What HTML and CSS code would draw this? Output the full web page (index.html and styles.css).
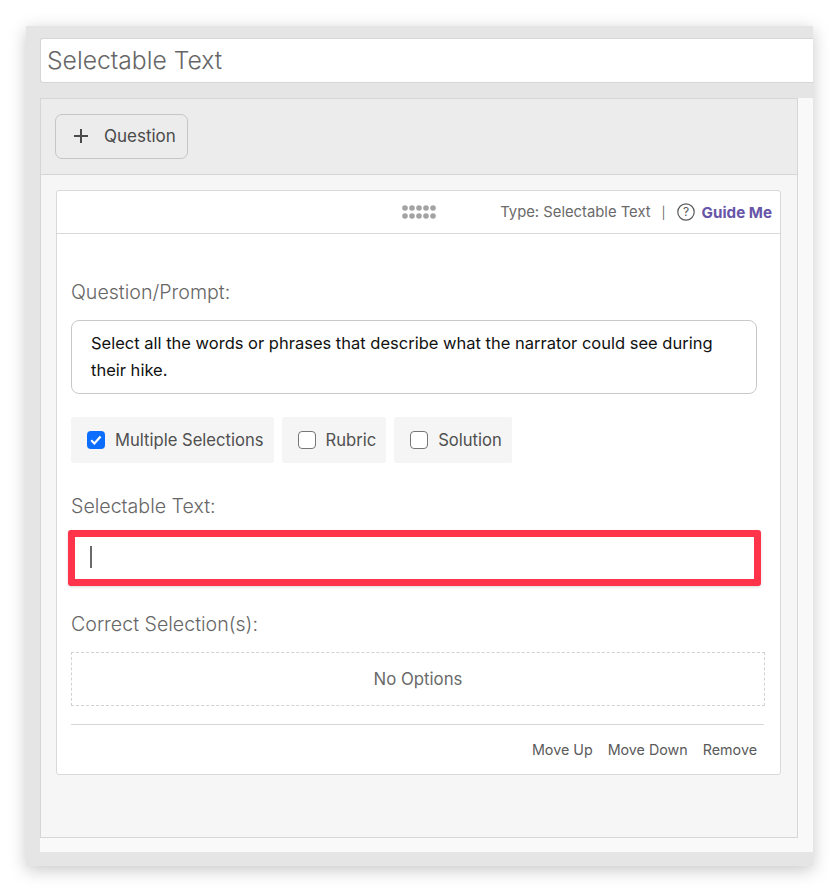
FILE: index.html
```html
<!DOCTYPE html>
<html lang="en">
<head>
<meta charset="utf-8">
<title>Selectable Text</title>
<link rel="stylesheet" href="styles.css">
</head>
<body>
<main class="panel">
  <div class="title-input">Selectable Text</div>
  <div class="scroll">
    <section class="inner">
      <div class="toolbar">
        <button class="add-btn"><svg class="plus" width="16" height="16" viewBox="0 0 16 16"><path d="M8 1v14M1 8h14" stroke="#4a4a4a" stroke-width="2" fill="none"/></svg><span>Question</span></button>
      </div>
      <div class="content">
        <article class="card">
          <header class="card-head">
            <svg class="grip" width="34" height="14" viewBox="0 0 34 14"><g fill="#a3a3a3"><circle cx="3" cy="3" r="2.8"/><circle cx="10" cy="3" r="2.8"/><circle cx="17" cy="3" r="2.8"/><circle cx="24" cy="3" r="2.8"/><circle cx="31" cy="3" r="2.8"/><circle cx="3" cy="11" r="2.8"/><circle cx="10" cy="11" r="2.8"/><circle cx="17" cy="11" r="2.8"/><circle cx="24" cy="11" r="2.8"/><circle cx="31" cy="11" r="2.8"/></g></svg>
            <div class="meta">
              <span class="type">Type: Selectable Text</span>
              <span class="sep">|</span>
              <svg class="help" width="18" height="18" viewBox="0 0 18 18"><circle cx="9" cy="9" r="8.2" fill="none" stroke="#595959" stroke-width="1.2"/><text x="9" y="13" text-anchor="middle" class="help-q">?</text></svg>
              <a class="guide">Guide Me</a>
            </div>
          </header>
          <div class="card-body">
            <label class="label first">Question/Prompt:</label>
            <div class="prompt">Select all the words or phrases that describe what the narrator could see during their hike.</div>
            <div class="options">
              <div class="opt"><span class="box checked"><svg width="18" height="18" viewBox="0 0 18 18"><path d="M4.2 9.3l3.2 3.2 6.2-7" fill="none" stroke="#fff" stroke-width="2.2"/></svg></span>Multiple Selections</div>
              <div class="opt wide"><span class="box"></span>Rubric</div>
              <div class="opt wide"><span class="box"></span>Solution</div>
            </div>
            <label class="label second">Selectable Text:</label>
            <div class="text-field"><span class="caret"></span></div>
            <label class="label third">Correct Selection(s):</label>
            <div class="no-options">No Options</div>
            <footer class="card-foot">
              <a>Move Up</a><a>Move Down</a><a>Remove</a>
            </footer>
          </div>
        </article>
      </div>
    </section>
  </div>
</main>
</body>
</html>
```
FILE: styles.css
```css
* { box-sizing: border-box; }
html, body { margin: 0; height: 100%; background: #fff; }
body { padding: 26px; font-family: "Inter", "Liberation Sans", sans-serif; overflow: hidden; }
.panel {
  width: 787px; height: 840px; background: #e5e5e5;
  padding: 12px 0 14px 14px;
  box-shadow: 0 4px 16px rgba(0,0,0,.22);
}
.title-input {
  height: 45px; background: #fff; border: 1px solid #d6d6d6; border-right: 0;
  border-radius: 3px 0 0 3px; padding-left: 6px;
  font-size: 24.7px; font-weight: 300; line-height: 42px; color: #666;
  margin-bottom: 15px;
}
.scroll { height: 754px; background: #f9f9f9; }
.inner { width: 758px; height: 740px; background: #f6f6f6; border: 1px solid #d6d6d6; }
.toolbar { height: 76px; background: #ececec; border-bottom: 1px solid #d6d6d6; padding: 15px 14px; }
.add-btn {
  width: 133px; height: 45px; background: #ececec; border: 1px solid #c6c6c6; border-radius: 7px;
  display: flex; align-items: center; padding: 0 0 2px 17px; gap: 15px;
  font: 400 17px "Inter", sans-serif; color: #4a4a4a;
}
.content { padding: 15px 15px 0; }
.card { width: 725px; height: 585px; background: #fff; border: 1px solid #d9d9d9; border-radius: 3px; }
.card-head { height: 43px; border-bottom: 1px solid #d9d9d9; display: flex; align-items: center; position: relative; padding-right: 8px; justify-content: flex-end; }
.grip { position: absolute; left: 345px; top: 14px; }
.meta { display: flex; align-items: center; font-size: 14.8px; color: #6a6a6a; }
.sep { margin: 0 11px 0 11px; font-size: 12px; }
.help { margin-right: 7px; }
.help-q { font: 400 12px "Inter", sans-serif; fill: #595959; }
.guide { font-size: 15.2px; font-weight: 700; color: #6755a8; }
.card-body { padding: 0 14px; }
.label { display: block; font-size: 19.6px; font-weight: 300; color: #666; line-height: 24px; }
.first { margin-top: 46px; }
.second { margin-top: 31px; }
.third { margin-top: 26px; }
.prompt {
  width: 686px; height: 74px; margin-top: 16px; padding: 9px 19px;
  border: 1px solid #c9c9c9; border-radius: 8px;
  font-size: 16.5px; font-weight: 400; line-height: 27px; color: #111;
}
.options { display: flex; gap: 8px; margin-top: 23px; }
.opt { height: 46px; background: #f5f5f5; border-radius: 2px; display: flex; align-items: center; padding: 0 10px 0 16px; gap: 10px; font-size: 16.6px; color: #505050; }
.box { width: 18px; height: 18px; border: 1.5px solid #767676; border-radius: 4px; background: #fff; flex: none; }
.box.checked { background: #0d6efd; border: 0; }
.box svg { display: block; }
.text-field {
  width: 693px; height: 56px; margin: 12px 0 0 -3px;
  border: 7px solid #ff334a; border-radius: 3px; background: #fff;
  padding: 9px 0 0 15px;
  box-shadow: 0 1px 3px rgba(0,0,0,.15);
}
.caret { display: block; width: 2px; height: 22px; background: #6a6a6a; }
.no-options {
  width: 694px; height: 54px; margin-top: 16px; border: 1px dashed #d2d2d2;
  display: flex; align-items: center; justify-content: center;
  font-size: 16.8px; color: #6a6a6a;
}
.card-foot {
  width: 693px; height: 50px; margin-top: 18px; border-top: 1px solid #d6d6d6;
  display: flex; justify-content: flex-end; align-items: center; gap: 15px; padding-right: 7px;
  font-size: 14.3px; font-weight: 400; color: #5a5a5a;
}
```
